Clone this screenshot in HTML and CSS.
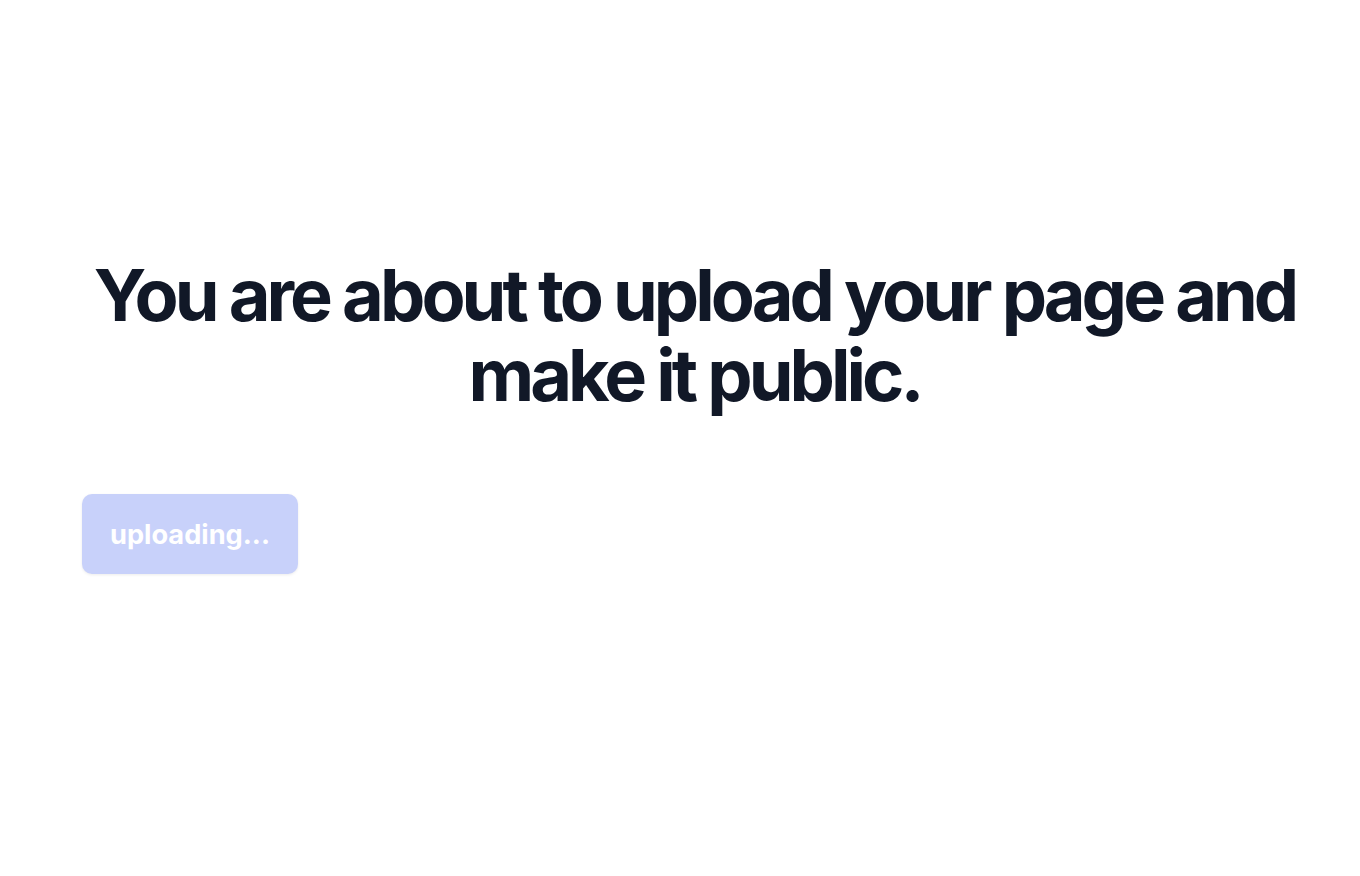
FILE: index.html
```html
<!DOCTYPE html>
<html lang="en">
<head>
<meta charset="utf-8">
<title>Upload</title>
<link rel="stylesheet" href="styles.css">
</head>
<body>
<main class="page">
  <h1 class="title">You are about to upload your page and make it public.</h1>
  <div class="actions">
    <button class="btn" disabled>uploading...</button>
  </div>
</main>
</body>
</html>
```
FILE: styles.css
```css
html, body {
  margin: 0;
  padding: 0;
  background: #ffffff;
}
body {
  font-family: Inter, "Noto Sans", sans-serif;
  color: #111827;
}
.page {
  box-sizing: border-box;
  width: 1360px;
  height: 876px;
  padding: 255px 53px 0 82px;
}
.title {
  margin: 0;
  text-align: center;
  font-size: 72px;
  line-height: 80px;
  font-weight: 700;
  letter-spacing: -0.055em;
  color: #111827;
}
.actions {
  margin-top: 79px;
  display: flex;
}
.btn {
  box-sizing: border-box;
  height: 80px;
  padding: 0 28px;
  border: none;
  border-radius: 10px;
  background: #c8d1fa;
  color: #ffffff;
  font-family: Inter, sans-serif;
  font-size: 27.2px;
  font-weight: 700;
  letter-spacing: 0;
  box-shadow: 0 1px 3px rgba(0,0,0,0.08);
}
```
